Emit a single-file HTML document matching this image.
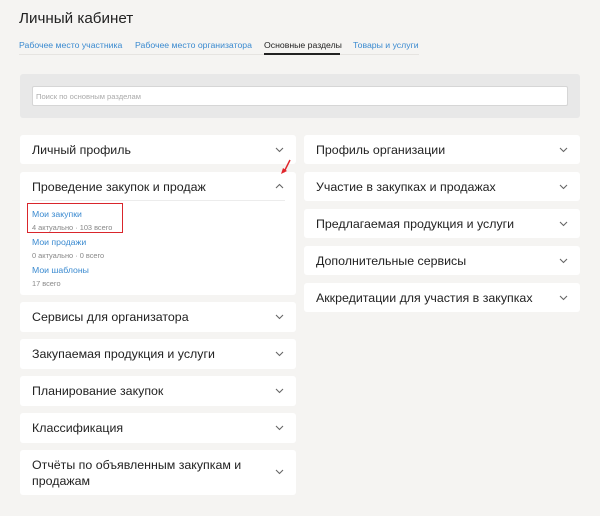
<!DOCTYPE html>
<html><head><meta charset="utf-8"><style>
*{margin:0;padding:0;box-sizing:border-box}
body{width:600px;height:516px;background:#f5f4f2;font-family:"Liberation Sans",Arial,sans-serif;position:relative;overflow:hidden;color:#222}
.a{position:absolute}
.card{position:absolute;background:#fff;border-radius:3px}
.card .t{position:absolute;left:12px;font-size:12.4px;color:#222;line-height:16px}
.chev{position:absolute;width:9px;height:6px}
.tab{position:absolute;top:40px;font-size:8.7px;color:#3a8ad0;white-space:nowrap}
.l{font-size:8.7px;color:#3a8ad0}
.s{font-size:7.4px;color:#888}
</style></head><body>
<div class="a" style="left:19px;top:10px;font-size:15.2px;color:#222">Личный кабинет</div>
<div class="tab" style="left:19px">Рабочее место участника</div>
<div class="tab" style="left:135px">Рабочее место организатора</div>
<div class="tab" style="left:264px;color:#222">Основные разделы</div>
<div class="tab" style="left:353px">Товары и услуги</div>
<div class="a" style="left:19px;top:54px;width:400px;height:1px;background:#e6e4e1"></div>
<div class="a" style="left:264px;top:53px;width:76px;height:2px;background:#222"></div>

<div class="a" style="left:20px;top:74px;width:560px;height:44px;background:#e8e8e8;border-radius:3px"></div>
<div class="a" style="left:32px;top:86px;width:536px;height:20px;background:#fff;border:1px solid #d6d6d6;border-radius:2px;font-size:7.6px;color:#aaa;padding:5px 0 0 3px">Поиск по основным разделам</div>

<svg width="0" height="0" style="position:absolute"><defs><symbol id="dn" viewBox="0 0 9 6"><path d="M1 1L4.5 4.5L8 1" fill="none" stroke="#666" stroke-width="1.1"/></symbol><symbol id="up" viewBox="0 0 9 6"><path d="M1 5L4.5 1.5L8 5" fill="none" stroke="#666" stroke-width="1.1"/></symbol></defs></svg>

<div class="card" style="left:20px;top:135px;width:276px;height:29px"><div class="t" style="top:7px">Личный профиль</div><svg class="chev" style="left:255px;top:12px"><use href="#dn"/></svg></div>
<div class="card" style="left:20px;top:172px;width:276px;height:123px">
<div class="t" style="top:7px">Проведение закупок и продаж</div><svg class="chev" style="left:255px;top:11px"><use href="#up"/></svg>
<div class="a" style="left:12px;top:28px;width:253px;height:1px;background:#ececec"></div>
<div class="a" style="left:7px;top:31px;width:96px;height:30px;border:1.5px solid #d9262c"></div>
<div class="a l" style="left:12px;top:37px">Мои закупки</div>
<div class="a s" style="left:12px;top:51px">4 актуально · 103 всего</div>
<div class="a l" style="left:12px;top:65px">Мои продажи</div>
<div class="a s" style="left:12px;top:79px">0 актуально · 0 всего</div>
<div class="a l" style="left:12px;top:93px">Мои шаблоны</div>
<div class="a s" style="left:12px;top:107px">17 всего</div>
</div>
<svg class="a" style="left:278px;top:158px" width="16" height="20"><path d="M12 2L6 14" stroke="#e0262c" stroke-width="1.5"/><path d="M3 16L5 10L9 13Z" fill="#e0262c"/></svg>

<div class="card" style="left:20px;top:302px;width:276px;height:30px"><div class="t" style="top:7px">Сервисы для организатора</div><svg class="chev" style="left:255px;top:12px"><use href="#dn"/></svg></div>
<div class="card" style="left:20px;top:339px;width:276px;height:30px"><div class="t" style="top:7px">Закупаемая продукция и услуги</div><svg class="chev" style="left:255px;top:12px"><use href="#dn"/></svg></div>
<div class="card" style="left:20px;top:376px;width:276px;height:30px"><div class="t" style="top:7px">Планирование закупок</div><svg class="chev" style="left:255px;top:12px"><use href="#dn"/></svg></div>
<div class="card" style="left:20px;top:413px;width:276px;height:30px"><div class="t" style="top:7px">Классификация</div><svg class="chev" style="left:255px;top:12px"><use href="#dn"/></svg></div>
<div class="card" style="left:20px;top:450px;width:276px;height:45px"><div class="t" style="top:7px;width:230px">Отчёты по объявленным закупкам и продажам</div><svg class="chev" style="left:255px;top:19px"><use href="#dn"/></svg></div>

<div class="card" style="left:304px;top:135px;width:276px;height:29px"><div class="t" style="top:7px">Профиль организации</div><svg class="chev" style="left:255px;top:12px"><use href="#dn"/></svg></div>
<div class="card" style="left:304px;top:172px;width:276px;height:29px"><div class="t" style="top:7px">Участие в закупках и продажах</div><svg class="chev" style="left:255px;top:12px"><use href="#dn"/></svg></div>
<div class="card" style="left:304px;top:209px;width:276px;height:29px"><div class="t" style="top:7px">Предлагаемая продукция и услуги</div><svg class="chev" style="left:255px;top:12px"><use href="#dn"/></svg></div>
<div class="card" style="left:304px;top:246px;width:276px;height:29px"><div class="t" style="top:7px">Дополнительные сервисы</div><svg class="chev" style="left:255px;top:12px"><use href="#dn"/></svg></div>
<div class="card" style="left:304px;top:283px;width:276px;height:29px"><div class="t" style="top:7px">Аккредитации для участия в закупках</div><svg class="chev" style="left:255px;top:12px"><use href="#dn"/></svg></div>
</body></html>
